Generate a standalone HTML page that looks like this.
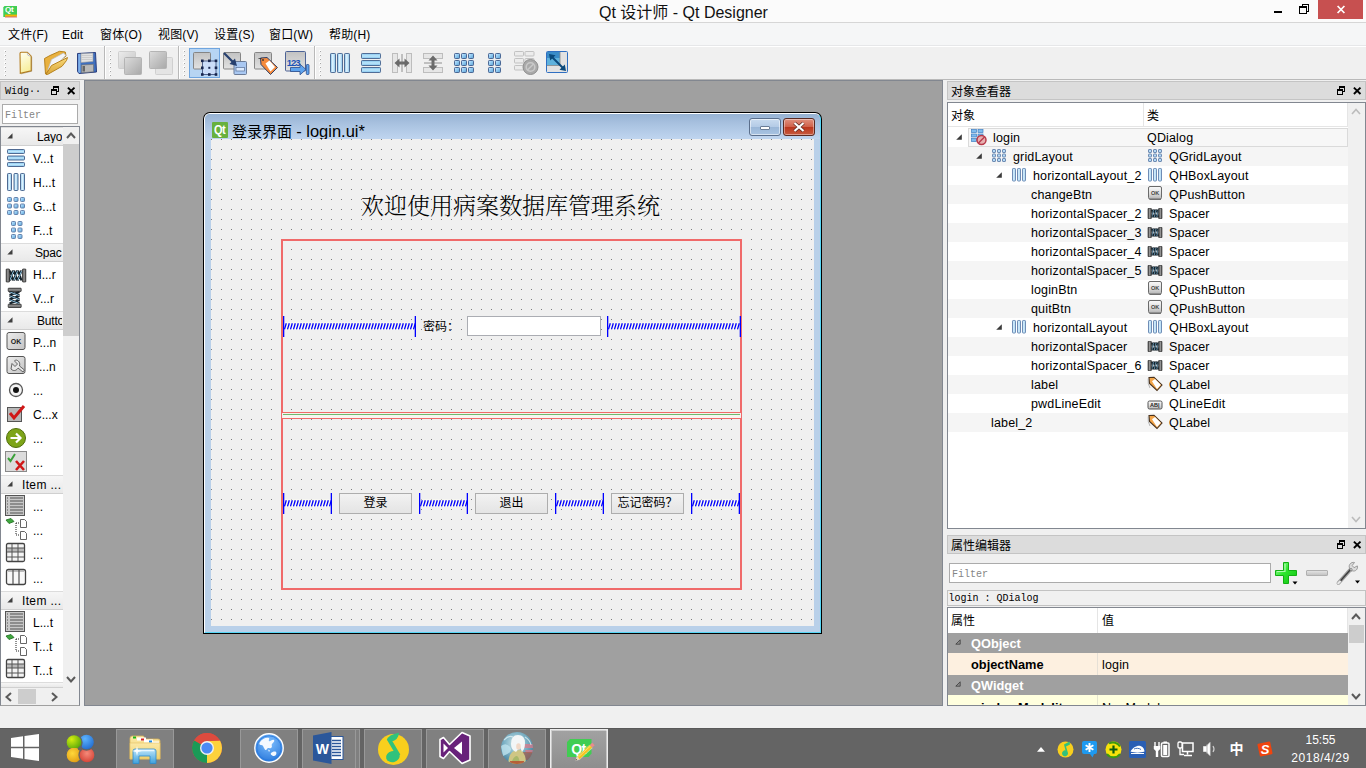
<!DOCTYPE html>
<html lang="zh-CN">
<head>
<meta charset="utf-8">
<title>Qt 设计师 - Qt Designer</title>
<style>
html,body{margin:0;padding:0;width:1366px;height:768px;overflow:hidden;background:#f0f0f0;
  font-family:"Liberation Sans","Noto Sans CJK SC",sans-serif;font-size:12px;color:#000;line-height:1}
*{box-sizing:border-box}
.a{position:absolute}
.t{position:absolute;white-space:nowrap;line-height:1}
.mono{font-family:"Liberation Mono","Noto Sans CJK SC",monospace;font-size:10px}
svg{position:absolute;overflow:visible}
/* title bar */
#titlebar{left:0;top:0;width:1366px;height:22px;background:#fbfbfb}
#titleline{left:0;top:22px;width:1366px;height:1px;background:#d6d6d6}
#menubar{left:0;top:23px;width:1366px;height:22px;background:#f5f6f7}
#menuline{left:0;top:45px;width:1366px;height:1px;background:#e6e7e9}
#toolbar{left:0;top:46px;width:1366px;height:33px;background:#f0f0f0;border-top:1px solid #fff}
#toolline{left:0;top:79px;width:1366px;height:1px;background:#b9b9b9}
#mdi{left:84px;top:80px;width:859px;height:626px;background:#a0a0a0;border:1px solid #828790}
#taskbar{left:0;top:728px;width:1366px;height:40px;background:#646464;border-top:1px solid #595959}
.docktitle{background:#dcdcdc;border:1px solid #c4c4c4;height:20px}
.white{background:#fff}
.grip{width:2px;height:28px;background:linear-gradient(135deg,#fff 0,#fff 50%,#a9a9a9 50%,#a9a9a9 100%) 0 0/2px 4px repeat-y;background-image:linear-gradient(#0000 0,#0000 2px,#f0f0f0 2px,#f0f0f0 4px),linear-gradient(135deg,#fdfdfd 0,#fdfdfd 50%,#a6a6a6 50%,#a6a6a6 100%);background-size:2px 4px,2px 2px;background-repeat:repeat-y,repeat}
.cat{background:linear-gradient(#f6f6f6,#e9e9e9);border-top:1px solid #dcdcdc;border-bottom:1px solid #d0d0d0}
.sim{font-family:"Liberation Sans","Noto Sans CJK SC",sans-serif}
.song{font-family:"Liberation Serif","Noto Serif CJK SC",serif}
.btn{border:1px solid #adadad;background:linear-gradient(#f2f2f2,#e4e4e4);font-size:12px;text-align:center;line-height:19px;white-space:nowrap}
.ot{font-size:12.500px;letter-spacing:0.160px;margin-top:1px}
.pb{font-size:12.800px;font-weight:bold}
.m{top:29px;font-size:12px;letter-spacing:0.150px}
</style>
</head>
<body>
<!-- ===== main window chrome ===== -->
<div class="a" id="titlebar"></div>
<div class="a" id="titleline"></div>
<div class="a" id="menubar"></div>
<div class="a" id="menuline"></div>
<div class="a" id="toolbar"></div>
<div class="a" id="toolline"></div>
<div class="a" id="mdi"></div>
<!-- title bar -->
<svg class="a" style="left:3px;top:5px" width="15" height="13" viewBox="0 0 15 13"><path d="M1.5 1h12.5v9.5l-1.5 1.5H0.3v-9.8z" fill="#41cd52"/><rect x="2" y="9.6" width="12" height="2.2" fill="#f5b400"/><rect x="2" y="11.5" width="12" height="1" fill="#e07070"/></svg>
<div class="t" style="left:5px;top:6px;font-size:8px;font-weight:bold;color:#fff;letter-spacing:-0.3px">Qt</div>
<div class="t" id="wtitle" style="left:599px;top:4.5px;font-size:16px;color:#111">Qt 设计师 - Qt Designer</div>
<div class="a" style="left:1274px;top:11px;width:8px;height:2px;background:#000"></div>
<svg class="a" style="left:1299px;top:4px" width="11" height="11" viewBox="0 0 11 11" shape-rendering="crispEdges"><path d="M3.500 2V0.500H9.500V7.500H8" fill="none" stroke="#000" stroke-width="1"/><rect x="0.500" y="3.500" width="7" height="6" fill="none" stroke="#000" stroke-width="1"/><rect x="0" y="2" width="8" height="2" fill="#000"/></svg>
<div class="a" style="left:1318px;top:0;width:45px;height:19px;background:#c75050"></div>
<svg class="a" style="left:1337px;top:6px" width="8" height="7" viewBox="0 0 8 7"><path d="M0.600 0l6.800 7M7.400 0l-6.800 7" stroke="#fff" stroke-width="1.700" fill="none"/></svg>

<!-- menu bar -->
<div class="t m" style="left:8px">文件(F)</div>
<div class="t m" style="left:62px">Edit</div>
<div class="t m" style="left:100px">窗体(O)</div>
<div class="t m" style="left:158px">视图(V)</div>
<div class="t m" style="left:214px">设置(S)</div>
<div class="t m" style="left:269px">窗口(W)</div>
<div class="t m" style="left:329px">帮助(H)</div>

<!-- toolbar -->
<svg width="0" height="0" style="position:absolute"><defs>
<linearGradient id="gBlueV" x1="0" y1="0" x2="1" y2="0"><stop offset="0" stop-color="#7fbfe8"/><stop offset="0.45" stop-color="#e6f6ff"/><stop offset="1" stop-color="#86c4ea"/></linearGradient>
<linearGradient id="gBlueH" x1="0" y1="0" x2="0" y2="1"><stop offset="0" stop-color="#7fc4ee"/><stop offset="0.5" stop-color="#bfe6fb"/><stop offset="1" stop-color="#7fc4ee"/></linearGradient>
<linearGradient id="gGray" x1="0" y1="0" x2="1" y2="1"><stop offset="0" stop-color="#ececec"/><stop offset="1" stop-color="#c4c4c4"/></linearGradient>
<linearGradient id="gGrayD" x1="0" y1="0" x2="1" y2="1"><stop offset="0" stop-color="#dcdcdc"/><stop offset="1" stop-color="#a8a8a8"/></linearGradient>
<linearGradient id="gGrayV" x1="0" y1="0" x2="0" y2="1"><stop offset="0" stop-color="#c2c2c2"/><stop offset="1" stop-color="#e2e2e2"/></linearGradient>
<linearGradient id="gBtn" x1="0" y1="0" x2="0" y2="1"><stop offset="0" stop-color="#fafafa"/><stop offset="0.550" stop-color="#dedede"/><stop offset="1" stop-color="#b4b4b4"/></linearGradient>
<linearGradient id="gDoc" x1="0" y1="0" x2="0.3" y2="1"><stop offset="0" stop-color="#fffff2"/><stop offset="1" stop-color="#f7ee9c"/></linearGradient>
<linearGradient id="gFold" x1="0" y1="0" x2="0" y2="1"><stop offset="0" stop-color="#f9d978"/><stop offset="1" stop-color="#d9a63a"/></linearGradient>
<linearGradient id="gSq" x1="0" y1="0" x2="1" y2="1"><stop offset="0" stop-color="#cfeaff"/><stop offset="0.5" stop-color="#8ec8f0"/><stop offset="1" stop-color="#5b9fd0"/></linearGradient>
</defs></svg>
<div class="a grip" style="left:4px;top:50px"></div>
<div class="a grip" style="left:109px;top:50px"></div>
<div class="a grip" style="left:183px;top:50px"></div>
<div class="a grip" style="left:319px;top:50px"></div>
<div class="a" style="left:104px;top:46px;width:1px;height:33px;background:#b9b9b9"></div><div class="a" style="left:105px;top:47px;width:1px;height:32px;background:#fff"></div>
<div class="a" style="left:178px;top:46px;width:1px;height:33px;background:#b9b9b9"></div><div class="a" style="left:179px;top:47px;width:1px;height:32px;background:#fff"></div>
<div class="a" style="left:314px;top:46px;width:1px;height:33px;background:#b9b9b9"></div><div class="a" style="left:315px;top:47px;width:1px;height:32px;background:#fff"></div>
<svg style="left:18px;top:51px" width="16" height="24" viewBox="0 0 16 24"><path d="M2 2.600Q2 1.400 3.200 1.300L9.300 1.200L13.200 5.300V19.700L2.300 22.400Z" fill="url(#gDoc)" stroke="#b47c1c" stroke-width="1.100"/><path d="M13.700 6v14.200L3 22.900" fill="none" stroke="#8a6a30" stroke-width="0.700" opacity="0.600"/><path d="M9.200 1.800Q9 5 12.600 5.300" fill="#fff" stroke="#a9a9b4" stroke-width="0.700"/></svg>
<svg style="left:43px;top:50px" width="26" height="26" viewBox="0 0 26 26"><path d="M1.500 8.500L7 5.500L16.500 1.300L22.300 2L23 6L10 16L2.500 24Z" fill="#e9b13f" stroke="#b88420" stroke-width="1"/><path d="M4.800 20L8.500 9.500L20.500 3L22.800 5.300L9 20Z" fill="#f3f5f9" stroke="#b9bdc6" stroke-width="0.700"/><path d="M3 24.400L8.500 15.500L24.500 7.500L23.500 10.500L19 16.300L4.500 24.500Z" fill="url(#gFold)" stroke="#b88420" stroke-width="1"/></svg>
<svg style="left:76px;top:51px" width="22" height="24" viewBox="0 0 22 24"><path d="M1.5 2.5L19.5 1.5L20.5 21L3 22.5L1.5 20.5Z" fill="#3f6fbe" stroke="#2c3f7e" stroke-width="1"/><path d="M2.2 3L4.5 3V21.5L3 22L2.2 20.5Z" fill="#7fb0ea"/><path d="M5 2.7L17 2V10.5L5 11.5Z" fill="#e2e2e2" stroke="#9a9a9a" stroke-width="0.6"/><path d="M5.5 14L17.5 13.3V20.8L5.5 21.8Z" fill="#b9b9b9" stroke="#6d6d6d" stroke-width="0.6"/><rect x="6.5" y="15" width="2.5" height="5.5" fill="#666"/><path d="M5.5 4.5h11M5.5 6.5h11M5.5 8.5h11" stroke="#bdbdbd" stroke-width="0.6"/></svg>
<svg style="left:118px;top:51px" width="25" height="25" viewBox="0 0 25 25"><rect x="0.5" y="0.5" width="17" height="17" rx="1" fill="url(#gGray)" stroke="#cfcfcf"/><rect x="6.5" y="6.5" width="17" height="17" rx="1" fill="url(#gGrayD)" stroke="#b4b4b4"/></svg>
<svg style="left:149px;top:51px" width="25" height="25" viewBox="0 0 25 25"><rect x="6.5" y="6.5" width="17" height="17" rx="1" fill="#e4e4e4" stroke="#d0d0d0"/><rect x="0.5" y="0.5" width="17" height="17" rx="1" fill="url(#gGrayD)" stroke="#b4b4b4"/></svg>
<div class="a" style="left:189px;top:48px;width:31px;height:30px;background:#b7d5f3;border:1px solid #6fa5df"></div>
<svg style="left:193px;top:52px" width="25" height="25" viewBox="0 0 25 25"><rect x="0.500" y="0.500" width="17" height="16.500" rx="1" fill="url(#gGrayV)" stroke="#858585"/><rect x="9.500" y="9" width="13.500" height="13.500" fill="#cbddf9" stroke="#44557f" stroke-width="0.900"/><g fill="#16244d"><rect x="8" y="7.500" width="2.600" height="2.600"/><rect x="15" y="7.500" width="2.600" height="2.600"/><rect x="21.700" y="7.500" width="2.600" height="2.600"/><rect x="8" y="14.500" width="2.600" height="2.600"/><rect x="21.700" y="14.500" width="2.600" height="2.600"/><rect x="8" y="21.200" width="2.600" height="2.600"/><rect x="15" y="21.200" width="2.600" height="2.600"/><rect x="21.700" y="21.200" width="2.600" height="2.600"/><rect x="15.300" y="14.800" width="2" height="2"/></g></svg>
<svg style="left:223px;top:52px" width="25" height="25" viewBox="0 0 25 25"><rect x="0.500" y="0.500" width="17" height="16.500" rx="1" fill="url(#gGrayV)" stroke="#858585"/><rect x="11" y="9.500" width="12.500" height="13" rx="1" fill="#a9c8f2" stroke="#6b7b96"/><rect x="13" y="15.500" width="8.500" height="3.500" fill="#dcebff" stroke="#5b6f94" stroke-width="0.700"/><path d="M1 1L10.500 10.500" stroke="#27406f" stroke-width="2.200"/><path d="M14 14L6.500 12L12 6.500Z" fill="#27406f"/></svg>
<svg style="left:254px;top:52px" width="26" height="26" viewBox="0 0 26 26"><rect x="0.500" y="0.500" width="17" height="16.500" rx="1" fill="url(#gGrayV)" stroke="#858585"/><path d="M6.500 6L13 5.500L23.500 15.500L16.500 22.500L7 12.500Z" fill="#f58a3c" stroke="#2f3f66" stroke-width="1"/><path d="M11.500 11.500L15.500 8.500L21 15L16.500 19.500Z" fill="#fff"/><circle cx="9" cy="8" r="0.900" fill="#333"/><path d="M4.500 6.500h3" stroke="#333" stroke-width="0.800"/></svg>
<svg style="left:285px;top:51px" width="25" height="25" viewBox="0 0 25 25"><rect x="0.500" y="0.500" width="20" height="19.500" rx="1" fill="url(#gGrayV)" stroke="#4d6396"/><text x="1.800" y="14.600" font-family="Liberation Sans, sans-serif" font-size="9.500" font-weight="bold" fill="#1c53b8" letter-spacing="-1.100">123</text><path d="M5.500 16.500h9.500v-3.300l6 5.300l-6 5.300v-3.300H5.500Z" fill="#5fa4ee" stroke="#2b4d8c" stroke-width="0.800"/><rect x="21.300" y="13.500" width="2.700" height="10" rx="0.800" fill="#5fa4ee" stroke="#2b4d8c" stroke-width="0.800"/></svg>
<svg style="left:329px;top:52px" width="22" height="22" viewBox="0 0 22 22"><rect x="1.5" y="1.5" width="5" height="19" rx="0.8" fill="url(#gBlueV)" stroke="#44618c" stroke-width="0.9"/><rect x="8.5" y="1.5" width="5" height="19" rx="0.8" fill="url(#gBlueV)" stroke="#44618c" stroke-width="0.9"/><rect x="15.5" y="1.5" width="5" height="19" rx="0.8" fill="url(#gBlueV)" stroke="#44618c" stroke-width="0.9"/></svg>
<svg style="left:360px;top:52px" width="22" height="22" viewBox="0 0 22 22"><rect x="1.5" y="1.5" width="19" height="5" rx="0.8" fill="url(#gBlueH)" stroke="#44618c" stroke-width="0.9"/><rect x="1.5" y="8.5" width="19" height="5" rx="0.8" fill="url(#gBlueH)" stroke="#44618c" stroke-width="0.9"/><rect x="1.5" y="15.5" width="19" height="5" rx="0.8" fill="url(#gBlueH)" stroke="#44618c" stroke-width="0.9"/></svg>
<svg style="left:391px;top:52px" width="22" height="22" viewBox="0 0 22 22"><rect x="1.5" y="1.5" width="5" height="19" fill="#e6e6e6" stroke="#bdbdbd"/><rect x="15.5" y="1.5" width="5" height="19" fill="#e6e6e6" stroke="#bdbdbd"/><path d="M3.5 11l5-4.5v3h5v-3l5 4.5l-5 4.5v-3h-5v3Z" fill="#6a6a6a"/><path d="M11 2v18" stroke="#777" stroke-width="0.8"/></svg>
<svg style="left:422px;top:52px" width="22" height="22" viewBox="0 0 22 22"><rect x="1.5" y="1.5" width="19" height="5" fill="#e6e6e6" stroke="#bdbdbd"/><rect x="1.5" y="15.5" width="19" height="5" fill="#e6e6e6" stroke="#bdbdbd"/><path d="M11 3.5l4.5 5h-3v5h3l-4.5 5l-4.5-5h3v-5h-3Z" fill="#6a6a6a"/><path d="M2 11h18" stroke="#777" stroke-width="0.8"/></svg>
<svg style="left:453px;top:52px" width="22" height="22" viewBox="0 0 22 22"><rect x="1.5" y="1.5" width="5" height="5" rx="0.8" fill="url(#gSq)" stroke="#3d5a8a" stroke-width="0.9"/><rect x="8.5" y="1.5" width="5" height="5" rx="0.8" fill="url(#gSq)" stroke="#3d5a8a" stroke-width="0.9"/><rect x="15.5" y="1.5" width="5" height="5" rx="0.8" fill="url(#gSq)" stroke="#3d5a8a" stroke-width="0.9"/><rect x="1.5" y="8.5" width="5" height="5" rx="0.8" fill="url(#gSq)" stroke="#3d5a8a" stroke-width="0.9"/><rect x="8.5" y="8.5" width="5" height="5" rx="0.8" fill="url(#gSq)" stroke="#3d5a8a" stroke-width="0.9"/><rect x="15.5" y="8.5" width="5" height="5" rx="0.8" fill="url(#gSq)" stroke="#3d5a8a" stroke-width="0.9"/><rect x="1.5" y="15.5" width="5" height="5" rx="0.8" fill="url(#gSq)" stroke="#3d5a8a" stroke-width="0.9"/><rect x="8.5" y="15.5" width="5" height="5" rx="0.8" fill="url(#gSq)" stroke="#3d5a8a" stroke-width="0.9"/><rect x="15.5" y="15.5" width="5" height="5" rx="0.8" fill="url(#gSq)" stroke="#3d5a8a" stroke-width="0.9"/></svg>
<svg style="left:487px;top:52px" width="15" height="22" viewBox="0 0 15 22"><rect x="1.5" y="1.5" width="5" height="5" rx="0.8" fill="url(#gSq)" stroke="#3d5a8a" stroke-width="0.9"/><rect x="8.5" y="1.5" width="5" height="5" rx="0.8" fill="url(#gSq)" stroke="#3d5a8a" stroke-width="0.9"/><rect x="1.5" y="8.5" width="5" height="5" rx="0.8" fill="url(#gSq)" stroke="#3d5a8a" stroke-width="0.9"/><rect x="8.5" y="8.5" width="5" height="5" rx="0.8" fill="url(#gSq)" stroke="#3d5a8a" stroke-width="0.9"/><rect x="1.5" y="15.5" width="5" height="5" rx="0.8" fill="url(#gSq)" stroke="#3d5a8a" stroke-width="0.9"/><rect x="8.5" y="15.5" width="5" height="5" rx="0.8" fill="url(#gSq)" stroke="#3d5a8a" stroke-width="0.9"/></svg>
<svg style="left:514px;top:50px" width="26" height="26" viewBox="0 0 26 26"><g fill="#ececec" stroke="#bcbcbc" stroke-width="0.9"><rect x="0.5" y="1.5" width="9" height="4.5" rx="0.8"/><rect x="11" y="1.5" width="9" height="4.5" rx="0.8"/><rect x="0.5" y="8.5" width="9" height="4.5" rx="0.8"/><rect x="11" y="8.5" width="9" height="4.5" rx="0.8"/><rect x="0.5" y="15.5" width="9" height="4.5" rx="0.8"/></g><circle cx="16.5" cy="17" r="7.5" fill="#a9a9a9" stroke="#8f8f8f"/><circle cx="16.5" cy="17" r="4.3" fill="none" stroke="#c9c9c9" stroke-width="1.6"/><path d="M13.5 20L19.5 14" stroke="#c9c9c9" stroke-width="1.6"/></svg>
<svg style="left:546px;top:51px" width="23" height="23" viewBox="0 0 23 23"><rect x="0.5" y="0.5" width="21" height="21" rx="1" fill="#e2e2e2" stroke="#2f6fc2"/><rect x="1" y="1" width="13" height="13.5" fill="#5fb2dd"/><rect x="1" y="1" width="13" height="6" fill="#3a8cc8"/><path d="M14 1v13.5H1" stroke="#888" stroke-width="0.8" fill="none"/><path d="M5 5L18 18" stroke="#0b4a7c" stroke-width="2"/><path d="M3 3l6.5 1.2L4.2 9.5Z" fill="#0b4a7c"/><path d="M20 20l-6.5-1.2l5.3-5.3Z" fill="#0b4a7c"/></svg>

<!-- left dock: widget box -->
<div class="a docktitle" style="left:0;top:81px;width:80px;height:19px"></div>
<div class="t mono" style="left:5px;top:87px">Widg··</div>
<svg style="left:51px;top:86px" width="9" height="9" viewBox="0 0 9 9" shape-rendering="crispEdges"><path d="M2 0h6v6h-2v-1h1v-3h-4v1h-1zM0 3h6v6h-6zM1 5v3h4v-3z" fill="#000" fill-rule="evenodd"/></svg><svg style="left:67px;top:86.7px" width="8.400" height="7.600" viewBox="0 0 8.400 7.600"><path d="M0.900 0.600L7.500 7M7.500 0.600L0.900 7" stroke="#000" stroke-width="1.900" fill="none"/></svg>
<div class="a white" style="left:2px;top:104px;width:76px;height:20px;border:1px solid #ababab"></div>
<div class="t mono" style="left:5px;top:110.500px;color:#858585">Filter</div>
<div class="a white" style="left:0;top:126px;width:80px;height:580px;border:1px solid #828790;border-bottom-color:#a0a0a0"></div>
<div class="a" style="left:63px;top:127px;width:16px;height:561px;background:#f0f0f0"></div>
<div class="a" style="left:63px;top:144px;width:16px;height:192px;background:#cdcdcd"></div>
<svg style="left:66px;top:132px" width="10" height="7" viewBox="0 0 10 7"><path d="M1 6L5 1.5L9 6" fill="none" stroke="#5a5a5a" stroke-width="2"/></svg>
<svg style="left:66px;top:676px" width="10" height="7" viewBox="0 0 10 7"><path d="M1 1L5 5.5L9 1" fill="none" stroke="#5a5a5a" stroke-width="2"/></svg>
<div class="a cat" style="left:1px;top:682px;width:62px;height:6px"></div>
<div class="a" style="left:1px;top:688px;width:78px;height:17px;background:#f0f0f0"></div>
<div class="a" style="left:18px;top:689px;width:18px;height:15px;background:#cdcdcd"></div>
<svg style="left:5px;top:692px" width="7" height="10" viewBox="0 0 7 10"><path d="M6 1L1.5 5L6 9" fill="none" stroke="#5a5a5a" stroke-width="2"/></svg>
<svg style="left:51px;top:692px" width="7" height="10" viewBox="0 0 7 10"><path d="M1 1L5.5 5L1 9" fill="none" stroke="#5a5a5a" stroke-width="2"/></svg>
<div class="a cat" style="left:1px;top:127px;width:62px;height:19px"></div><svg style="left:7px;top:133px" width="6" height="6" viewBox="0 0 6 6"><path d="M5.500 0.300V5.500H0.300Z" fill="#3f3f3f"/></svg><div class="t" style="left:37px;top:131px;width:25px;overflow:hidden;font-size:12px;letter-spacing:-0.200px">Layo</div>
<svg style="left:5px;top:146px" width="24" height="24" viewBox="0 0 24 24"><rect x="2.500" y="3.5" width="17" height="4" rx="0.800" fill="url(#gBlueH)" stroke="#4f6a92" stroke-width="1"/><rect x="2.500" y="10" width="17" height="4" rx="0.800" fill="url(#gBlueH)" stroke="#4f6a92" stroke-width="1"/><rect x="2.500" y="16.5" width="17" height="4" rx="0.800" fill="url(#gBlueH)" stroke="#4f6a92" stroke-width="1"/></svg><div class="t" style="left:33px;top:153px;font-size:12px">V...t</div>
<svg style="left:5px;top:170px" width="24" height="24" viewBox="0 0 24 24"><rect x="2.5" y="3.500" width="4" height="17" rx="0.800" fill="url(#gBlueV)" stroke="#4f6a92" stroke-width="1"/><rect x="9" y="3.500" width="4" height="17" rx="0.800" fill="url(#gBlueV)" stroke="#4f6a92" stroke-width="1"/><rect x="15.5" y="3.500" width="4" height="17" rx="0.800" fill="url(#gBlueV)" stroke="#4f6a92" stroke-width="1"/></svg><div class="t" style="left:33px;top:177px;font-size:12px">H...t</div>
<svg style="left:5px;top:194px" width="24" height="24" viewBox="0 0 24 24"><rect x="2.5" y="3.5" width="4" height="4" rx="0.800" fill="url(#gSq)" stroke="#6482ad" stroke-width="1"/><rect x="9" y="3.5" width="4" height="4" rx="0.800" fill="url(#gSq)" stroke="#6482ad" stroke-width="1"/><rect x="15.5" y="3.5" width="4" height="4" rx="0.800" fill="url(#gSq)" stroke="#6482ad" stroke-width="1"/><rect x="2.5" y="10" width="4" height="4" rx="0.800" fill="url(#gSq)" stroke="#6482ad" stroke-width="1"/><rect x="9" y="10" width="4" height="4" rx="0.800" fill="url(#gSq)" stroke="#6482ad" stroke-width="1"/><rect x="15.5" y="10" width="4" height="4" rx="0.800" fill="url(#gSq)" stroke="#6482ad" stroke-width="1"/><rect x="2.5" y="16.5" width="4" height="4" rx="0.800" fill="url(#gSq)" stroke="#6482ad" stroke-width="1"/><rect x="9" y="16.5" width="4" height="4" rx="0.800" fill="url(#gSq)" stroke="#6482ad" stroke-width="1"/><rect x="15.5" y="16.5" width="4" height="4" rx="0.800" fill="url(#gSq)" stroke="#6482ad" stroke-width="1"/></svg><div class="t" style="left:33px;top:201px;font-size:12px">G...t</div>
<svg style="left:5px;top:218px" width="24" height="24" viewBox="0 0 24 24"><rect x="6.5" y="3.5" width="4" height="4" rx="0.800" fill="url(#gSq)" stroke="#6482ad" stroke-width="1"/><rect x="13" y="3.5" width="4" height="4" rx="0.800" fill="url(#gSq)" stroke="#6482ad" stroke-width="1"/><rect x="6.5" y="10" width="4" height="4" rx="0.800" fill="url(#gSq)" stroke="#6482ad" stroke-width="1"/><rect x="13" y="10" width="4" height="4" rx="0.800" fill="url(#gSq)" stroke="#6482ad" stroke-width="1"/><rect x="6.5" y="16.5" width="4" height="4" rx="0.800" fill="url(#gSq)" stroke="#6482ad" stroke-width="1"/><rect x="13" y="16.5" width="4" height="4" rx="0.800" fill="url(#gSq)" stroke="#6482ad" stroke-width="1"/></svg><div class="t" style="left:33px;top:225px;font-size:12px">F...t</div>
<div class="a cat" style="left:1px;top:243px;width:62px;height:19px"></div><svg style="left:7px;top:249px" width="6" height="6" viewBox="0 0 6 6"><path d="M5.500 0.300V5.500H0.300Z" fill="#3f3f3f"/></svg><div class="t" style="left:35px;top:247px;width:27px;overflow:hidden;font-size:12px;letter-spacing:-0.200px">Spac</div>
<svg style="left:5px;top:262px" width="24" height="24" viewBox="0 0 24 24"><defs><linearGradient id="gBar" x1="0" y1="0" x2="1" y2="0"><stop offset="0" stop-color="#4a4a4a"/><stop offset="0.500" stop-color="#9a9a9a"/><stop offset="1" stop-color="#4a4a4a"/></linearGradient><linearGradient id="gBarH" x1="0" y1="0" x2="0" y2="1"><stop offset="0" stop-color="#4a4a4a"/><stop offset="0.500" stop-color="#9a9a9a"/><stop offset="1" stop-color="#4a4a4a"/></linearGradient></defs>
<path d="M4.500 18.500L8.500 8.500M8.500 18.500L12.500 8.500M12.500 18.500L16.500 8.500M5 8.500L8 18.500M9 8.500L12 18.500M13 8.500L16.500 18.500" stroke="#15222b" stroke-width="2.200" fill="none"/><path d="M5 18L8.500 9M9 18L12.500 9M13 18L16.500 9" stroke="#8fc3e0" stroke-width="1" fill="none"/>
<rect x="1.200" y="7" width="3.300" height="13" rx="0.500" fill="url(#gBar)" stroke="#222" stroke-width="0.700"/><rect x="17.500" y="7" width="3.300" height="13" rx="0.500" fill="url(#gBar)" stroke="#222" stroke-width="0.700"/></svg><div class="t" style="left:33px;top:269px;font-size:12px">H...r</div>
<svg style="left:5px;top:286px" width="24" height="24" viewBox="0 0 24 24"><path d="M4.500 5.500L14.500 9.500M4.500 9.500L14.500 13.500M4.500 13.500L14.500 17.500M14.500 6L4.500 9M14.500 10L4.500 13M14.500 14L4.500 17.500" stroke="#15222b" stroke-width="2.200" fill="none"/><path d="M5 6L14 9.500M5 10L14 13.500M5 14L14 17.500" stroke="#8fc3e0" stroke-width="1" fill="none"/>
<rect x="3.200" y="2.200" width="13" height="3.300" rx="0.500" fill="url(#gBarH)" stroke="#222" stroke-width="0.700"/><rect x="3.200" y="18.200" width="13" height="3.300" rx="0.500" fill="url(#gBarH)" stroke="#222" stroke-width="0.700"/></svg><div class="t" style="left:33px;top:293px;font-size:12px">V...r</div>
<div class="a cat" style="left:1px;top:311px;width:62px;height:19px"></div><svg style="left:7px;top:317px" width="6" height="6" viewBox="0 0 6 6"><path d="M5.500 0.300V5.500H0.300Z" fill="#3f3f3f"/></svg><div class="t" style="left:37px;top:315px;width:25px;overflow:hidden;font-size:12px;letter-spacing:-0.200px">Butto</div>
<svg style="left:5px;top:330px" width="24" height="24" viewBox="0 0 24 24"><rect x="2" y="2.5" width="18" height="17" rx="2" fill="url(#gGray)" stroke="#555" stroke-width="1"/><text x="11" y="14" text-anchor="middle" font-family="Liberation Sans,sans-serif" font-size="7" font-weight="bold" fill="#222">OK</text></svg><div class="t" style="left:33px;top:337px;font-size:12px">P...n</div>
<svg style="left:5px;top:354px" width="24" height="24" viewBox="0 0 24 24"><rect x="2" y="2.5" width="18" height="17" rx="2" fill="url(#gGray)" stroke="#555" stroke-width="1"/><path d="M6 15c3 3 6 1 7-1l5 4 1.5-2-5-4c1-3-1-6-4-6l-1 1 3 3-2.500 2.500-3-3z" fill="#e8e8e8" stroke="#555" stroke-width="0.9"/></svg><div class="t" style="left:33px;top:361px;font-size:12px">T...n</div>
<svg style="left:5px;top:378px" width="24" height="24" viewBox="0 0 24 24"><circle cx="11" cy="12" r="6.5" fill="#f4f4f4" stroke="#555" stroke-width="1.3"/><circle cx="11" cy="12" r="3" fill="#111"/></svg><div class="t" style="left:33px;top:385px;font-size:12px">...</div>
<svg style="left:5px;top:402px" width="24" height="24" viewBox="0 0 24 24"><rect x="2.5" y="5.500" width="14" height="14" fill="#b8b8b8" stroke="#555" stroke-width="1"/><path d="M5 11l4 5 10-12" stroke="#d01818" stroke-width="3" fill="none"/></svg><div class="t" style="left:33px;top:409px;font-size:12px">C...x</div>
<svg style="left:5px;top:426px" width="24" height="24" viewBox="0 0 24 24"><circle cx="11" cy="12" r="9.500" fill="#7da418" stroke="#4f6d0c" stroke-width="1"/><path d="M5.500 12h9M11 7.500l4.500 4.500-4.500 4.500" stroke="#fff" stroke-width="2.2" fill="none"/></svg><div class="t" style="left:33px;top:433px;font-size:12px">...</div>
<svg style="left:5px;top:450px" width="24" height="24" viewBox="0 0 24 24"><rect x="0.500" y="1.500" width="21" height="20" fill="#dcdcdc" stroke="#8a8a8a" stroke-width="1"/><path d="M3 8l2.500 3 4.500-7" stroke="#3aa03a" stroke-width="2" fill="none"/><path d="M11 11l8 9M19 11l-8 9" stroke="#d01818" stroke-width="2.600" fill="none"/></svg><div class="t" style="left:33px;top:457px;font-size:12px">...</div>
<div class="a cat" style="left:1px;top:475px;width:62px;height:19px"></div><svg style="left:7px;top:481px" width="6" height="6" viewBox="0 0 6 6"><path d="M5.500 0.300V5.500H0.300Z" fill="#3f3f3f"/></svg><div class="t" style="left:22px;top:479px;width:40px;overflow:hidden;font-size:12px;letter-spacing:0.350px">Item ...</div>
<svg style="left:5px;top:494px" width="24" height="24" viewBox="0 0 24 24"><rect x="0.500" y="1.500" width="19" height="20" fill="#c8c8c8" stroke="#555" stroke-width="1"/><path d="M2 4h1M5 4h13" stroke="#7a7a7a" stroke-width="1.400"/><path d="M2 7h1M5 7h13" stroke="#7a7a7a" stroke-width="1.400"/><path d="M2 10h1M5 10h13" stroke="#7a7a7a" stroke-width="1.400"/><path d="M2 13h1M5 13h13" stroke="#7a7a7a" stroke-width="1.400"/><path d="M2 16h1M5 16h13" stroke="#7a7a7a" stroke-width="1.400"/><path d="M2 19h1M5 19h13" stroke="#7a7a7a" stroke-width="1.400"/></svg><div class="t" style="left:33px;top:501px;font-size:12px">...</div>
<svg style="left:5px;top:518px" width="24" height="24" viewBox="0 0 24 24"><path d="M1 2l5-1.500 3 3-5 2z" fill="#3fa83f" stroke="#1d6a1d" stroke-width="0.800"/><path d="M11 5h3M11 5v12h3" stroke="#222" stroke-width="1" stroke-dasharray="1 1" fill="none"/><path d="M15.500 1.500h4l2 2v6h-6z" fill="#fff" stroke="#555" stroke-width="0.900"/><path d="M15.500 13.500h4l2 2v6h-6z" fill="#fff" stroke="#555" stroke-width="0.900"/></svg><div class="t" style="left:33px;top:525px;font-size:12px">...</div>
<svg style="left:5px;top:542px" width="24" height="24" viewBox="0 0 24 24"><rect x="1.500" y="1.500" width="18" height="18" rx="1.500" fill="#f4f4f4" stroke="#444" stroke-width="1.300"/><rect x="2" y="6" width="17" height="4" fill="#b8b8b8"/><path d="M2 6h17M2 10h17M2 15h17M7 2v17M13 2v17" stroke="#555" stroke-width="1"/></svg><div class="t" style="left:33px;top:549px;font-size:12px">...</div>
<svg style="left:5px;top:566px" width="24" height="24" viewBox="0 0 24 24"><rect x="1.500" y="3.500" width="19" height="15" rx="2" fill="#f8f8f8" stroke="#444" stroke-width="1.300"/><path d="M3 5h16" stroke="#aaa" stroke-width="1.500"/><path d="M8 4v14M14 4v14" stroke="#555" stroke-width="1.200"/></svg><div class="t" style="left:33px;top:573px;font-size:12px">...</div>
<div class="a cat" style="left:1px;top:591px;width:62px;height:19px"></div><svg style="left:7px;top:597px" width="6" height="6" viewBox="0 0 6 6"><path d="M5.500 0.300V5.500H0.300Z" fill="#3f3f3f"/></svg><div class="t" style="left:22px;top:595px;width:40px;overflow:hidden;font-size:12px;letter-spacing:0.350px">Item ...</div>
<svg style="left:5px;top:610px" width="24" height="24" viewBox="0 0 24 24"><rect x="0.500" y="1.500" width="19" height="20" fill="#c8c8c8" stroke="#555" stroke-width="1"/><path d="M2 4h1M5 4h13" stroke="#7a7a7a" stroke-width="1.400"/><path d="M2 7h1M5 7h13" stroke="#7a7a7a" stroke-width="1.400"/><path d="M2 10h1M5 10h13" stroke="#7a7a7a" stroke-width="1.400"/><path d="M2 13h1M5 13h13" stroke="#7a7a7a" stroke-width="1.400"/><path d="M2 16h1M5 16h13" stroke="#7a7a7a" stroke-width="1.400"/><path d="M2 19h1M5 19h13" stroke="#7a7a7a" stroke-width="1.400"/></svg><div class="t" style="left:33px;top:617px;font-size:12px">L...t</div>
<svg style="left:5px;top:634px" width="24" height="24" viewBox="0 0 24 24"><path d="M1 2l5-1.500 3 3-5 2z" fill="#3fa83f" stroke="#1d6a1d" stroke-width="0.800"/><path d="M11 5h3M11 5v12h3" stroke="#222" stroke-width="1" stroke-dasharray="1 1" fill="none"/><path d="M15.500 1.500h4l2 2v6h-6z" fill="#fff" stroke="#555" stroke-width="0.900"/><path d="M15.500 13.500h4l2 2v6h-6z" fill="#fff" stroke="#555" stroke-width="0.900"/></svg><div class="t" style="left:33px;top:641px;font-size:12px">T...t</div>
<svg style="left:5px;top:658px" width="24" height="24" viewBox="0 0 24 24"><rect x="1.500" y="1.500" width="18" height="18" rx="1.500" fill="#f4f4f4" stroke="#444" stroke-width="1.300"/><rect x="2" y="6" width="17" height="4" fill="#b8b8b8"/><path d="M2 6h17M2 10h17M2 15h17M7 2v17M13 2v17" stroke="#555" stroke-width="1"/></svg><div class="t" style="left:33px;top:665px;font-size:12px">T...t</div>

<!-- form window -->
<div class="a" id="fw" style="left:203px;top:112px;width:619px;height:522px;background:#000;border-radius:7px 7px 0 0"></div>
<div class="a" style="left:204px;top:113px;width:617px;height:520px;background:#b9d0e9;border-radius:6px 6px 0 0;border:1px solid #fff;border-right-color:#56d6f6;border-bottom-color:#56d6f6"></div>
<div class="a" style="left:205px;top:114px;width:615px;height:25px;background:linear-gradient(#97b3d3,#a9c2e0 40%,#bfd5ef);border-radius:5px 5px 0 0"></div>
<div class="a" style="left:205px;top:139px;width:6px;height:70px;background:linear-gradient(#bfd5ef,#b9d0e9)"></div>
<div class="a" id="fc" style="left:211px;top:139px;width:603px;height:487px;background-color:#f0f0f0;background-image:linear-gradient(90deg,transparent 1px,#f0f0f0 1px),linear-gradient(#7e7e7e 1px,transparent 1px);background-size:10px 10px"></div>
<div class="a" style="left:212px;top:122px;width:16px;height:16px;background:#68b13f;border-radius:1px"></div>
<div class="t" style="left:213.500px;top:123px;font-size:13px;font-weight:bold;color:#fff;letter-spacing:-0.8px;transform:scaleX(0.85);transform-origin:0 0">Qt</div>
<div class="a" style="left:232px;top:120px;width:300px;height:19px;overflow:hidden"><div class="t" id="ftitle" style="left:0;top:3px;font-size:15px;line-height:17px">登录界面 <span style="font-size:16.500px">- login.ui*</span></div></div>
<div class="a" style="left:749px;top:118px;width:32px;height:18px;border:1px solid #5b6f8c;border-radius:3px;background:linear-gradient(#c9dbef,#b4cbe6 48%,#9ab7d8 52%,#a9c4e2);box-shadow:inset 0 0 0 1px rgba(255,255,255,.55)"></div>
<div class="a" style="left:760px;top:126px;width:10px;height:4px;background:#fff;border:1px solid #6b7d96;border-radius:1px"></div>
<div class="a" style="left:783px;top:118px;width:32px;height:18px;border:1px solid #5a2a22;border-radius:3px;background:linear-gradient(#e0917f,#d0624b 48%,#bb361d 52%,#c65a3e);box-shadow:inset 0 0 0 1px rgba(255,255,255,.4)"></div>
<svg style="left:793px;top:122px" width="12" height="10" viewBox="0 0 12 10"><path d="M1.500 1l9 8M10.500 1l-9 8" stroke="#5a2a22" stroke-width="3.600" fill="none"/><path d="M1.500 1l9 8M10.500 1l-9 8" stroke="#fff" stroke-width="2.200" fill="none"/></svg>
<div class="t song" id="hl" style="left:361px;top:194.700px;font-size:23px;font-weight:300">欢迎使用病案数据库管理系统</div>
<div class="a" style="left:281px;top:239px;width:461px;height:351px;border:1px solid #f06a6a"></div>
<div class="a" style="left:282px;top:240px;width:459px;height:173px;border:1px solid #f06a6a"></div>
<div class="a" style="left:282px;top:418px;width:459px;height:171px;border:1px solid #f06a6a"></div>
<div class="a" style="left:283px;top:414px;width:457px;height:1px;background:#6fb86f"></div>
<div class="a" style="left:283px;top:413px;width:457px;height:1px;background:#f4f4ea"></div>
<div class="a" style="left:283px;top:415px;width:457px;height:3px;background:#f6f6f0"></div>
<svg width="0" height="0" style="position:absolute"><defs><pattern id="spring" x="1" y="0" width="3" height="21" patternUnits="userSpaceOnUse"><rect y="6.500" width="3" height="7.500" fill="#fbfbf0"/><path d="M0.500 13.300L2.300 7.200" stroke="#0000ff" stroke-width="1.300" fill="none"/></pattern></defs></svg>
<svg style="left:283px;top:316px" width="133" height="21" viewBox="0 0 133 21"><rect x="1" y="0" width="131" height="21" fill="url(#spring)"/><rect x="0" y="0" width="1.300" height="21" fill="#0000ff"/><rect x="131.7" y="0" width="1.300" height="21" fill="#0000ff"/></svg>
<svg style="left:607px;top:316px" width="134" height="21" viewBox="0 0 134 21"><rect x="1" y="0" width="132" height="21" fill="url(#spring)"/><rect x="0" y="0" width="1.300" height="21" fill="#0000ff"/><rect x="132.7" y="0" width="1.300" height="21" fill="#0000ff"/></svg>
<svg style="left:283px;top:493px" width="49" height="21" viewBox="0 0 49 21"><rect x="1" y="0" width="47" height="21" fill="url(#spring)"/><rect x="0" y="0" width="1.300" height="21" fill="#0000ff"/><rect x="47.7" y="0" width="1.300" height="21" fill="#0000ff"/></svg>
<svg style="left:419px;top:493px" width="49" height="21" viewBox="0 0 49 21"><rect x="1" y="0" width="47" height="21" fill="url(#spring)"/><rect x="0" y="0" width="1.300" height="21" fill="#0000ff"/><rect x="47.7" y="0" width="1.300" height="21" fill="#0000ff"/></svg>
<svg style="left:555px;top:493px" width="49" height="21" viewBox="0 0 49 21"><rect x="1" y="0" width="47" height="21" fill="url(#spring)"/><rect x="0" y="0" width="1.300" height="21" fill="#0000ff"/><rect x="47.7" y="0" width="1.300" height="21" fill="#0000ff"/></svg>
<svg style="left:691px;top:493px" width="49" height="21" viewBox="0 0 49 21"><rect x="1" y="0" width="47" height="21" fill="url(#spring)"/><rect x="0" y="0" width="1.300" height="21" fill="#0000ff"/><rect x="47.7" y="0" width="1.300" height="21" fill="#0000ff"/></svg>
<div class="t sim" style="left:423px;top:321px;font-size:12px">密码：</div>
<div class="a white" style="left:467px;top:316px;width:134px;height:20px;border:1px solid #abadb3"></div>
<div class="a btn sim" style="left:339px;top:493px;width:73px;height:21px">登录</div>
<div class="a btn sim" style="left:475px;top:493px;width:73px;height:21px">退出</div>
<div class="a btn sim" style="left:611px;top:493px;width:73px;height:21px">忘记密码？</div>

<!-- right dock: object inspector -->
<div class="a docktitle" style="left:947px;top:81px;width:419px;height:19px"></div>
<div class="t" style="left:951px;top:86px;font-size:12px">对象查看器</div>
<svg style="left:1337px;top:86px" width="9" height="9" viewBox="0 0 9 9" shape-rendering="crispEdges"><path d="M2 0h6v6h-2v-1h1v-3h-4v1h-1zM0 3h6v6h-6zM1 5v3h4v-3z" fill="#000" fill-rule="evenodd"/></svg><svg style="left:1353px;top:86.7px" width="8.400" height="7.600" viewBox="0 0 8.400 7.600"><path d="M0.900 0.600L7.500 7M7.500 0.600L0.900 7" stroke="#000" stroke-width="1.900" fill="none"/></svg>
<div class="a white" style="left:947px;top:102px;width:419px;height:427px;border:1px solid #828790"></div>
<div class="a" style="left:948px;top:103px;width:399px;height:24px;background:#fff;border-bottom:1px solid #e5e5e5"></div>
<div class="a" style="left:1143px;top:103px;width:1px;height:24px;background:#e5e5e5"></div><div class="a" style="left:1347px;top:103px;width:1px;height:24px;background:#e5e5e5"></div>
<div class="t" style="left:951px;top:110px;font-size:12px">对象</div><div class="t" style="left:1147px;top:110px;font-size:12px">类</div>
<div class="a" style="left:1348px;top:103px;width:17px;height:425px;background:#f0f0f0"></div>
<svg style="left:1351px;top:108px" width="10" height="7" viewBox="0 0 10 7"><path d="M1 6L5 1.500L9 6" fill="none" stroke="#bcbcbc" stroke-width="1.600"/></svg>
<svg style="left:1351px;top:516px" width="10" height="7" viewBox="0 0 10 7"><path d="M1 1L5 5.500L9 1" fill="none" stroke="#bcbcbc" stroke-width="1.600"/></svg>
<div class="a" style="left:968px;top:128px;width:380px;height:19px;background:#f7f7f7;border:1px solid #dadada"></div><svg style="left:956px;top:134px" width="6" height="6" viewBox="0 0 6 6"><path d="M5.800 0.200V5.800H0.200Z" fill="#3a3a3a"/></svg><svg style="left:971px;top:129px" width="16" height="16" viewBox="0 0 16 16"><g fill="#7fbcee" stroke="#3f7fc4" stroke-width="0.700"><rect x="0.500" y="0.500" width="5" height="3"/><rect x="7" y="0.500" width="5" height="3"/><rect x="0.500" y="5" width="5" height="3"/><rect x="7" y="5" width="5" height="3"/><rect x="0.500" y="9.500" width="5" height="3"/></g><circle cx="10.500" cy="11" r="4.500" fill="#e8b0b0" stroke="#b83a4a" stroke-width="1.500"/><path d="M7.500 14L13.500 8" stroke="#b83a4a" stroke-width="1.500"/></svg><div class="t ot" style="left:993px;top:131px">login</div><div class="t ot" style="left:1147px;top:131px">QDialog</div>
<div class="a" style="left:948px;top:147px;width:400px;height:19px;background:#f5f5f5"></div><svg style="left:976px;top:153px" width="6" height="6" viewBox="0 0 6 6"><path d="M5.800 0.200V5.800H0.200Z" fill="#3a3a3a"/></svg><svg style="left:991px;top:148px" width="16" height="16" viewBox="0 0 16 16"><rect x="1.5" y="1.5" width="3" height="3" rx="0.500" fill="#b4daf6" stroke="#6f8bb2" stroke-width="1"/><rect x="6.5" y="1.5" width="3" height="3" rx="0.500" fill="#b4daf6" stroke="#6f8bb2" stroke-width="1"/><rect x="11.5" y="1.5" width="3" height="3" rx="0.500" fill="#b4daf6" stroke="#6f8bb2" stroke-width="1"/><rect x="1.5" y="6" width="3" height="3" rx="0.500" fill="#b4daf6" stroke="#6f8bb2" stroke-width="1"/><rect x="6.5" y="6" width="3" height="3" rx="0.500" fill="#b4daf6" stroke="#6f8bb2" stroke-width="1"/><rect x="11.5" y="6" width="3" height="3" rx="0.500" fill="#b4daf6" stroke="#6f8bb2" stroke-width="1"/><rect x="1.5" y="10.5" width="3" height="3" rx="0.500" fill="#b4daf6" stroke="#6f8bb2" stroke-width="1"/><rect x="6.5" y="10.5" width="3" height="3" rx="0.500" fill="#b4daf6" stroke="#6f8bb2" stroke-width="1"/><rect x="11.5" y="10.5" width="3" height="3" rx="0.500" fill="#b4daf6" stroke="#6f8bb2" stroke-width="1"/></svg><div class="t ot" style="left:1013px;top:150px">gridLayout</div><svg style="left:1147px;top:148px" width="16" height="16" viewBox="0 0 16 16"><rect x="1.5" y="1.5" width="3" height="3" rx="0.500" fill="#b4daf6" stroke="#6f8bb2" stroke-width="1"/><rect x="6.5" y="1.5" width="3" height="3" rx="0.500" fill="#b4daf6" stroke="#6f8bb2" stroke-width="1"/><rect x="11.5" y="1.5" width="3" height="3" rx="0.500" fill="#b4daf6" stroke="#6f8bb2" stroke-width="1"/><rect x="1.5" y="6" width="3" height="3" rx="0.500" fill="#b4daf6" stroke="#6f8bb2" stroke-width="1"/><rect x="6.5" y="6" width="3" height="3" rx="0.500" fill="#b4daf6" stroke="#6f8bb2" stroke-width="1"/><rect x="11.5" y="6" width="3" height="3" rx="0.500" fill="#b4daf6" stroke="#6f8bb2" stroke-width="1"/><rect x="1.5" y="10.5" width="3" height="3" rx="0.500" fill="#b4daf6" stroke="#6f8bb2" stroke-width="1"/><rect x="6.5" y="10.5" width="3" height="3" rx="0.500" fill="#b4daf6" stroke="#6f8bb2" stroke-width="1"/><rect x="11.5" y="10.5" width="3" height="3" rx="0.500" fill="#b4daf6" stroke="#6f8bb2" stroke-width="1"/></svg><div class="t ot" style="left:1169px;top:150px">QGridLayout</div>
<svg style="left:996px;top:172px" width="6" height="6" viewBox="0 0 6 6"><path d="M5.800 0.200V5.800H0.200Z" fill="#3a3a3a"/></svg><svg style="left:1011px;top:167px" width="16" height="16" viewBox="0 0 16 16"><rect x="1.5" y="1.500" width="3" height="12.500" rx="0.700" fill="url(#gBlueV)" stroke="#6f8db6" stroke-width="1"/><rect x="6.5" y="1.500" width="3" height="12.500" rx="0.700" fill="url(#gBlueV)" stroke="#6f8db6" stroke-width="1"/><rect x="11.5" y="1.500" width="3" height="12.500" rx="0.700" fill="url(#gBlueV)" stroke="#6f8db6" stroke-width="1"/></svg><div class="t ot" style="left:1033px;top:169px">horizontalLayout_2</div><svg style="left:1147px;top:167px" width="16" height="16" viewBox="0 0 16 16"><rect x="1.5" y="1.500" width="3" height="12.500" rx="0.700" fill="url(#gBlueV)" stroke="#6f8db6" stroke-width="1"/><rect x="6.5" y="1.500" width="3" height="12.500" rx="0.700" fill="url(#gBlueV)" stroke="#6f8db6" stroke-width="1"/><rect x="11.5" y="1.500" width="3" height="12.500" rx="0.700" fill="url(#gBlueV)" stroke="#6f8db6" stroke-width="1"/></svg><div class="t ot" style="left:1169px;top:169px">QHBoxLayout</div>
<div class="a" style="left:948px;top:185px;width:400px;height:19px;background:#f5f5f5"></div><div class="t ot" style="left:1031px;top:188px">changeBtn</div><svg style="left:1147px;top:186px" width="16" height="16" viewBox="0 0 16 16"><rect x="1.500" y="0.500" width="13" height="12.500" rx="1.500" fill="url(#gBtn)" stroke="#6a6a6a" stroke-width="1"/><path d="M2.500 13.500h11.500" stroke="#555" stroke-width="1" opacity="0.700"/><text x="8" y="9" text-anchor="middle" font-family="Liberation Sans,sans-serif" font-size="5.500" font-weight="bold" fill="#444">OK</text></svg><div class="t ot" style="left:1169px;top:188px">QPushButton</div>
<div class="t ot" style="left:1031px;top:207px">horizontalSpacer_2</div><svg style="left:1147px;top:205px" width="16" height="16" viewBox="0 0 16 16"><path d="M4.500 12.500L6.500 4.500M7 12.500L9 4.500M9.500 12.500L11.500 4.500M4.500 4.500L6.500 12.500M7 4.500L9 12.500M9.500 4.500L11.500 12.500" stroke="#15222b" stroke-width="1.500" fill="none"/><path d="M4.800 12L6.500 5M7.300 12L9 5M9.800 12L11.500 5" stroke="#7fb6d6" stroke-width="0.700" fill="none"/><path d="M1 3.500h3.300v10H1z" fill="url(#gBar)" stroke="#222" stroke-width="0.600"/><path d="M11.700 3.500H15v10h-3.300z" fill="url(#gBar)" stroke="#222" stroke-width="0.600"/></svg><div class="t ot" style="left:1169px;top:207px">Spacer</div>
<div class="a" style="left:948px;top:223px;width:400px;height:19px;background:#f5f5f5"></div><div class="t ot" style="left:1031px;top:226px">horizontalSpacer_3</div><svg style="left:1147px;top:224px" width="16" height="16" viewBox="0 0 16 16"><path d="M4.500 12.500L6.500 4.500M7 12.500L9 4.500M9.500 12.500L11.500 4.500M4.500 4.500L6.500 12.500M7 4.500L9 12.500M9.500 4.500L11.500 12.500" stroke="#15222b" stroke-width="1.500" fill="none"/><path d="M4.800 12L6.500 5M7.300 12L9 5M9.800 12L11.500 5" stroke="#7fb6d6" stroke-width="0.700" fill="none"/><path d="M1 3.500h3.300v10H1z" fill="url(#gBar)" stroke="#222" stroke-width="0.600"/><path d="M11.700 3.500H15v10h-3.300z" fill="url(#gBar)" stroke="#222" stroke-width="0.600"/></svg><div class="t ot" style="left:1169px;top:226px">Spacer</div>
<div class="t ot" style="left:1031px;top:245px">horizontalSpacer_4</div><svg style="left:1147px;top:243px" width="16" height="16" viewBox="0 0 16 16"><path d="M4.500 12.500L6.500 4.500M7 12.500L9 4.500M9.500 12.500L11.500 4.500M4.500 4.500L6.500 12.500M7 4.500L9 12.500M9.500 4.500L11.500 12.500" stroke="#15222b" stroke-width="1.500" fill="none"/><path d="M4.800 12L6.500 5M7.300 12L9 5M9.800 12L11.500 5" stroke="#7fb6d6" stroke-width="0.700" fill="none"/><path d="M1 3.500h3.300v10H1z" fill="url(#gBar)" stroke="#222" stroke-width="0.600"/><path d="M11.700 3.500H15v10h-3.300z" fill="url(#gBar)" stroke="#222" stroke-width="0.600"/></svg><div class="t ot" style="left:1169px;top:245px">Spacer</div>
<div class="a" style="left:948px;top:261px;width:400px;height:19px;background:#f5f5f5"></div><div class="t ot" style="left:1031px;top:264px">horizontalSpacer_5</div><svg style="left:1147px;top:262px" width="16" height="16" viewBox="0 0 16 16"><path d="M4.500 12.500L6.500 4.500M7 12.500L9 4.500M9.500 12.500L11.500 4.500M4.500 4.500L6.500 12.500M7 4.500L9 12.500M9.500 4.500L11.500 12.500" stroke="#15222b" stroke-width="1.500" fill="none"/><path d="M4.800 12L6.500 5M7.300 12L9 5M9.800 12L11.500 5" stroke="#7fb6d6" stroke-width="0.700" fill="none"/><path d="M1 3.500h3.300v10H1z" fill="url(#gBar)" stroke="#222" stroke-width="0.600"/><path d="M11.700 3.500H15v10h-3.300z" fill="url(#gBar)" stroke="#222" stroke-width="0.600"/></svg><div class="t ot" style="left:1169px;top:264px">Spacer</div>
<div class="t ot" style="left:1031px;top:283px">loginBtn</div><svg style="left:1147px;top:281px" width="16" height="16" viewBox="0 0 16 16"><rect x="1.500" y="0.500" width="13" height="12.500" rx="1.500" fill="url(#gBtn)" stroke="#6a6a6a" stroke-width="1"/><path d="M2.500 13.500h11.500" stroke="#555" stroke-width="1" opacity="0.700"/><text x="8" y="9" text-anchor="middle" font-family="Liberation Sans,sans-serif" font-size="5.500" font-weight="bold" fill="#444">OK</text></svg><div class="t ot" style="left:1169px;top:283px">QPushButton</div>
<div class="a" style="left:948px;top:299px;width:400px;height:19px;background:#f5f5f5"></div><div class="t ot" style="left:1031px;top:302px">quitBtn</div><svg style="left:1147px;top:300px" width="16" height="16" viewBox="0 0 16 16"><rect x="1.500" y="0.500" width="13" height="12.500" rx="1.500" fill="url(#gBtn)" stroke="#6a6a6a" stroke-width="1"/><path d="M2.500 13.500h11.500" stroke="#555" stroke-width="1" opacity="0.700"/><text x="8" y="9" text-anchor="middle" font-family="Liberation Sans,sans-serif" font-size="5.500" font-weight="bold" fill="#444">OK</text></svg><div class="t ot" style="left:1169px;top:302px">QPushButton</div>
<svg style="left:996px;top:324px" width="6" height="6" viewBox="0 0 6 6"><path d="M5.800 0.200V5.800H0.200Z" fill="#3a3a3a"/></svg><svg style="left:1011px;top:319px" width="16" height="16" viewBox="0 0 16 16"><rect x="1.5" y="1.500" width="3" height="12.500" rx="0.700" fill="url(#gBlueV)" stroke="#6f8db6" stroke-width="1"/><rect x="6.5" y="1.500" width="3" height="12.500" rx="0.700" fill="url(#gBlueV)" stroke="#6f8db6" stroke-width="1"/><rect x="11.5" y="1.500" width="3" height="12.500" rx="0.700" fill="url(#gBlueV)" stroke="#6f8db6" stroke-width="1"/></svg><div class="t ot" style="left:1033px;top:321px">horizontalLayout</div><svg style="left:1147px;top:319px" width="16" height="16" viewBox="0 0 16 16"><rect x="1.5" y="1.500" width="3" height="12.500" rx="0.700" fill="url(#gBlueV)" stroke="#6f8db6" stroke-width="1"/><rect x="6.5" y="1.500" width="3" height="12.500" rx="0.700" fill="url(#gBlueV)" stroke="#6f8db6" stroke-width="1"/><rect x="11.5" y="1.500" width="3" height="12.500" rx="0.700" fill="url(#gBlueV)" stroke="#6f8db6" stroke-width="1"/></svg><div class="t ot" style="left:1169px;top:321px">QHBoxLayout</div>
<div class="a" style="left:948px;top:337px;width:400px;height:19px;background:#f5f5f5"></div><div class="t ot" style="left:1031px;top:340px">horizontalSpacer</div><svg style="left:1147px;top:338px" width="16" height="16" viewBox="0 0 16 16"><path d="M4.500 12.500L6.500 4.500M7 12.500L9 4.500M9.500 12.500L11.500 4.500M4.500 4.500L6.500 12.500M7 4.500L9 12.500M9.500 4.500L11.500 12.500" stroke="#15222b" stroke-width="1.500" fill="none"/><path d="M4.800 12L6.500 5M7.300 12L9 5M9.800 12L11.500 5" stroke="#7fb6d6" stroke-width="0.700" fill="none"/><path d="M1 3.500h3.300v10H1z" fill="url(#gBar)" stroke="#222" stroke-width="0.600"/><path d="M11.700 3.500H15v10h-3.300z" fill="url(#gBar)" stroke="#222" stroke-width="0.600"/></svg><div class="t ot" style="left:1169px;top:340px">Spacer</div>
<div class="t ot" style="left:1031px;top:359px">horizontalSpacer_6</div><svg style="left:1147px;top:357px" width="16" height="16" viewBox="0 0 16 16"><path d="M4.500 12.500L6.500 4.500M7 12.500L9 4.500M9.500 12.500L11.500 4.500M4.500 4.500L6.500 12.500M7 4.500L9 12.500M9.500 4.500L11.500 12.500" stroke="#15222b" stroke-width="1.500" fill="none"/><path d="M4.800 12L6.500 5M7.300 12L9 5M9.800 12L11.500 5" stroke="#7fb6d6" stroke-width="0.700" fill="none"/><path d="M1 3.500h3.300v10H1z" fill="url(#gBar)" stroke="#222" stroke-width="0.600"/><path d="M11.700 3.500H15v10h-3.300z" fill="url(#gBar)" stroke="#222" stroke-width="0.600"/></svg><div class="t ot" style="left:1169px;top:359px">Spacer</div>
<div class="a" style="left:948px;top:375px;width:400px;height:19px;background:#f5f5f5"></div><div class="t ot" style="left:1031px;top:378px">label</div><svg style="left:1147px;top:376px" width="16" height="16" viewBox="0 0 16 16"><path d="M2 1.500L7 1.200L15 9L10 14.500L2.500 7.500Z" fill="#f4a64a" stroke="#4a3420" stroke-width="1.100"/><path d="M5 5.300L8 2.900L13.800 8.800L10 12.900Z" fill="#fff"/><path d="M1.200 2.500Q0.500 8 3 12" stroke="#888" stroke-width="0.600" fill="none"/></svg><div class="t ot" style="left:1169px;top:378px">QLabel</div>
<div class="t ot" style="left:1031px;top:397px">pwdLineEdit</div><svg style="left:1147px;top:395px" width="16" height="16" viewBox="0 0 16 16"><rect x="1" y="6" width="14" height="8" rx="1.500" fill="url(#gBtn)" stroke="#555" stroke-width="1"/><text x="7.800" y="12.300" text-anchor="middle" font-family="Liberation Sans,sans-serif" font-size="5.500" font-weight="bold" fill="#222">AB|</text></svg><div class="t ot" style="left:1169px;top:397px">QLineEdit</div>
<div class="a" style="left:948px;top:413px;width:400px;height:19px;background:#f5f5f5"></div><div class="t ot" style="left:991px;top:416px">label_2</div><svg style="left:1147px;top:414px" width="16" height="16" viewBox="0 0 16 16"><path d="M2 1.500L7 1.200L15 9L10 14.500L2.500 7.500Z" fill="#f4a64a" stroke="#4a3420" stroke-width="1.100"/><path d="M5 5.300L8 2.900L13.800 8.800L10 12.900Z" fill="#fff"/><path d="M1.200 2.500Q0.500 8 3 12" stroke="#888" stroke-width="0.600" fill="none"/></svg><div class="t ot" style="left:1169px;top:416px">QLabel</div>

<!-- property editor -->
<div class="a docktitle" style="left:947px;top:535px;width:419px;height:19px"></div>
<div class="t" style="left:951px;top:540px;font-size:12px">属性编辑器</div>
<svg style="left:1337px;top:540px" width="9" height="9" viewBox="0 0 9 9" shape-rendering="crispEdges"><path d="M2 0h6v6h-2v-1h1v-3h-4v1h-1zM0 3h6v6h-6zM1 5v3h4v-3z" fill="#000" fill-rule="evenodd"/></svg><svg style="left:1353px;top:540.7px" width="8.400" height="7.600" viewBox="0 0 8.400 7.600"><path d="M0.900 0.600L7.500 7M7.500 0.600L0.900 7" stroke="#000" stroke-width="1.900" fill="none"/></svg>
<div class="a white" style="left:949px;top:563px;width:322px;height:20px;border:1px solid #ababab"></div>
<div class="t mono" style="left:952px;top:569.500px;color:#858585">Filter</div>
<svg style="left:1275px;top:562px" width="24" height="24" viewBox="0 0 24 24"><defs><linearGradient id="gPlus" x1="0" y1="0" x2="1" y2="1"><stop offset="0" stop-color="#a8ffa8"/><stop offset="0.450" stop-color="#2ee62e"/><stop offset="1" stop-color="#10c010"/></linearGradient></defs><path d="M8.500 0.500h5v8h8v5h-8v8h-5v-8h-8v-5h8z" fill="url(#gPlus)" stroke="#12b012" stroke-width="1"/><path d="M10 2v7.500H2" stroke="#c8ffc8" stroke-width="1.200" fill="none" opacity="0.800"/><path d="M17.500 19.500h5l-2.500 3z" fill="#000"/></svg>
<div class="a" style="left:1306px;top:570px;width:22px;height:6px;background:linear-gradient(#e2e2e2,#c4c4c4);border:1px solid #b0b0b0;border-radius:1px"></div>
<svg style="left:1336px;top:561px" width="26" height="26" viewBox="0 0 26 26"><path d="M2.500 22L15 8" stroke="#9c9c9c" stroke-width="3.800" stroke-linecap="round"/><path d="M3 21.500L14.500 8.500" stroke="#3c3c3c" stroke-width="1.300" stroke-linecap="round"/><path d="M2.300 22.300L4 20.500" stroke="#e8e8e8" stroke-width="2.200" stroke-linecap="round"/><path d="M13.500 7c-1.300-3 1.500-6.300 5-5.500l-2.300 3 1.800 2.200 3.300-1.800c1 3.200-2 6.200-5.300 4.800l-1.200 0.800z" fill="#dcdcdc" stroke="#9a9a9a" stroke-width="1"/><circle cx="15" cy="8.500" r="1" fill="#fff" stroke="#444" stroke-width="0.600"/><path d="M19 19.500h5l-2.500 3z" fill="#000"/></svg>
<div class="a" style="left:947px;top:590px;width:419px;height:16px;border:1px solid #c2c2c2;background:#f0f0f0"></div>
<div class="t mono" style="left:948.500px;top:594px">login : QDialog</div>
<div class="a white" style="left:947px;top:607px;width:419px;height:99px;border:1px solid #828790;overflow:hidden" id="pbox">
<div class="a" style="left:0;top:0;width:400px;height:25px;background:#fff"></div><div class="a" style="left:149px;top:0;width:1px;height:25px;background:#e5e5e5"></div><div class="a" style="left:399px;top:0;width:1px;height:25px;background:#e5e5e5"></div><div class="t" style="left:3px;top:7px;font-size:12px">属性</div><div class="t" style="left:154px;top:7px;font-size:12px">值</div>
<div class="a" style="left:0;top:25px;width:400px;height:20px;background:#a0a0a0"></div><svg style="left:7px;top:31px" width="6" height="6" viewBox="0 0 6 6"><path d="M5.200 0.800V5.200H0.800Z" fill="#8c8c8c" stroke="#3c3c3c" stroke-width="0.800"/></svg><div class="t pb" style="left:23px;top:30px;color:#fff">QObject</div>
<div class="a" style="left:0;top:45px;width:400px;height:22px;background:#fdf0e0"></div><div class="a" style="left:149px;top:45px;width:1px;height:22px;background:#e6e0d6"></div><div class="t pb" style="left:23px;top:51px">objectName</div><div class="t ot" style="left:154px;top:50px">login</div>
<div class="a" style="left:0;top:67px;width:400px;height:20px;background:#a0a0a0"></div><svg style="left:7px;top:73px" width="6" height="6" viewBox="0 0 6 6"><path d="M5.200 0.800V5.200H0.800Z" fill="#8c8c8c" stroke="#3c3c3c" stroke-width="0.800"/></svg><div class="t pb" style="left:23px;top:72px;color:#fff">QWidget</div>
<div class="a" style="left:0;top:87px;width:400px;height:22px;background:#ffffde"></div><div class="a" style="left:149px;top:87px;width:1px;height:22px;background:#e6e6d0"></div><div class="t pb" style="left:23px;top:93.500px">windowModality</div><div class="t ot" style="left:154px;top:92.500px">NonModal</div>
<div class="a" style="left:400px;top:0;width:17px;height:97px;background:#f0f0f0"></div><div class="a" style="left:401px;top:17px;width:15px;height:18px;background:#cdcdcd"></div><svg style="left:403px;top:5px" width="10" height="7" viewBox="0 0 10 7"><path d="M1 6L5 1.500L9 6" fill="none" stroke="#5a5a5a" stroke-width="2"/></svg><svg style="left:403px;top:85px" width="10" height="7" viewBox="0 0 10 7"><path d="M1 1L5 5.500L9 1" fill="none" stroke="#5a5a5a" stroke-width="2"/></svg></div>

<div class="a" id="taskbar"></div>
<!-- taskbar -->
<div class="a" style="left:116px;top:729px;width:58px;height:39px;background:#808080;border:1px solid #999;border-bottom:none"></div>
<div class="a" style="left:240px;top:729px;width:58px;height:39px;background:#808080;border:1px solid #999;border-bottom:none"></div>
<div class="a" style="left:302px;top:729px;width:54px;height:39px;background:#808080;border:1px solid #999;border-bottom:none"></div>
<div class="a" style="left:355px;top:729px;width:5px;height:39px;background:#808080;border:1px solid #999;border-bottom:none"></div>
<div class="a" style="left:364px;top:729px;width:58px;height:39px;background:#808080;border:1px solid #999;border-bottom:none"></div>
<div class="a" style="left:426px;top:729px;width:58px;height:39px;background:#808080;border:1px solid #999;border-bottom:none"></div>
<div class="a" style="left:488px;top:729px;width:58px;height:39px;background:#808080;border:1px solid #999;border-bottom:none"></div>
<div class="a" style="left:550px;top:729px;width:58px;height:39px;background:linear-gradient(#a2a2a2,#8e8e8e);border:1px solid #ececec;border-bottom:none;box-shadow:inset 1px 1px 0 rgba(255,255,255,.45),inset -1px 0 0 rgba(255,255,255,.45)"></div>
<svg style="left:11px;top:734px" width="28" height="27" viewBox="0 0 28 27"><path d="M0 4L12 2.300V12.800H0ZM13.500 2.100L28 0V12.800H13.500ZM0 14.200H12V24.700L0 23ZM13.500 14.200H28V27L13.500 24.900Z" fill="#fff"/></svg>
<svg style="left:65px;top:733px" width="30" height="30" viewBox="0 0 30 30"><defs>
<radialGradient id="rgG" cx="0.350" cy="0.300" r="0.800"><stop offset="0" stop-color="#d7ee10"/><stop offset="1" stop-color="#3f9a0a"/></radialGradient>
<radialGradient id="rgB" cx="0.400" cy="0.300" r="0.800"><stop offset="0" stop-color="#5db4ff"/><stop offset="1" stop-color="#1a62c8"/></radialGradient>
<radialGradient id="rgY" cx="0.400" cy="0.400" r="0.800"><stop offset="0" stop-color="#ffd83a"/><stop offset="1" stop-color="#d98a08"/></radialGradient>
<radialGradient id="rgR" cx="0.500" cy="0.400" r="0.800"><stop offset="0" stop-color="#f58a7a"/><stop offset="1" stop-color="#c8281c"/></radialGradient>
<clipPath id="cpY"><rect x="0" y="15" width="13" height="15"/></clipPath></defs>
<g stroke="#646464" stroke-width="1.300"><circle cx="9" cy="22" r="8" fill="url(#rgY)"/><circle cx="22" cy="22" r="8" fill="url(#rgR)"/><circle cx="21.500" cy="9" r="8" fill="url(#rgB)"/><circle cx="9" cy="9.500" r="8" fill="url(#rgG)"/><circle cx="9" cy="22" r="8" fill="url(#rgY)" clip-path="url(#cpY)"/></g><circle cx="15.300" cy="15.500" r="2.200" fill="#646464"/></svg>
<svg style="left:129px;top:734px" width="32" height="31" viewBox="0 0 32 31"><defs><linearGradient id="gFo" x1="0" y1="0" x2="0" y2="1"><stop offset="0" stop-color="#fbe9a6"/><stop offset="1" stop-color="#f1d06d"/></linearGradient><linearGradient id="gSt" x1="0" y1="0" x2="0" y2="1"><stop offset="0" stop-color="#bfe6fb"/><stop offset="1" stop-color="#3ea0dc"/></linearGradient></defs>
<path d="M1 4.500Q1 2 3.500 2H14.500L16 5H29Q31 5 31 7V25H1Z" fill="url(#gFo)" stroke="#d9b45a" stroke-width="0.800"/><rect x="8" y="3.500" width="9" height="3" fill="#fff"/><rect x="15" y="5.500" width="9" height="3" fill="#fff"/><rect x="22" y="7.500" width="8" height="3" fill="#fff"/>
<rect x="4" y="2.500" width="3" height="2" fill="#1bb31b"/><rect x="12" y="4.500" width="3" height="2" fill="#d62222"/><rect x="20" y="6.500" width="3" height="2" fill="#1e8ae6"/>
<path d="M1 9H31V25H1Z" fill="url(#gFo)" stroke="#e2bf63" stroke-width="0.600"/>
<path d="M4 17Q4 15 6 15H25Q27 15 27 17V29.500H21V22H10V29.500H4Z" fill="url(#gSt)" stroke="#2e8ccc" stroke-width="0.800"/><path d="M6 16.500H25" stroke="#e9f7ff" stroke-width="1.500"/><path d="M8 12l1 4 4 1-4 1-1 4-1-4-4-1 4-1z" fill="#fff" opacity="0.900"/></svg>
<svg style="left:192px;top:733px" width="30" height="30" viewBox="0 0 30 30"><circle cx="15" cy="15" r="15" fill="#dd4b3e"/><path d="M15 15L2.010 7.500A15 15 0 0 0 15 30Z" fill="#1b9a57"/><path d="M15 15L15 30A15 15 0 0 0 27.990 7.500H15Z" fill="#fdd23d"/><path d="M15 15L2.010 7.500A15 15 0 0 1 27.990 7.500L15 8.200Z" fill="#dd4b3e"/><path d="M15 15L8.900 18.500L2.010 7.500Z" fill="#1b9a57"/><path d="M15 30L21.100 18.500L15 15Z" fill="#fdd23d"/><circle cx="15" cy="15" r="7" fill="#f1f1f1"/><circle cx="15" cy="15" r="5.600" fill="#4a8af4"/></svg>
<svg style="left:254px;top:733px" width="30" height="30" viewBox="0 0 30 30"><defs><radialGradient id="rgGl" cx="0.500" cy="0.300" r="0.800"><stop offset="0" stop-color="#7fc0ff"/><stop offset="1" stop-color="#1f6fd6"/></radialGradient></defs><circle cx="15" cy="15" r="14.200" fill="url(#rgGl)" stroke="#fff" stroke-width="1.400"/><circle cx="15" cy="15" r="12.200" fill="none" stroke="#2a78dc" stroke-width="0.800"/><path d="M6 9c2-3 6-5 9-4 1 1-1 2 0 3s3-2 5-1c1 1-1 3-2 4s1 3-1 4-3-1-4 1-2 1-3-1-1-3-3-3-2-2-1-3z" fill="#f4f9ff"/><path d="M17 20c1-1 4-2 5-1s0 4-2 4-4-2-3-3z" fill="#f4f9ff"/><path d="M14 16.500l2 1-1 1.500z" fill="#f4f9ff"/></svg>
<svg style="left:313px;top:732px" width="31" height="32" viewBox="0 0 31 32"><rect x="16" y="4.500" width="14" height="23" fill="#fff" stroke="#2b579a" stroke-width="1"/><path d="M19 8.500h9M19 11.500h9M19 14.500h9M19 17.500h9M19 20.500h9M19 23.500h9" stroke="#2b579a" stroke-width="1.300"/><path d="M0 3.500L18.500 0V32L0 28.500Z" fill="#2b579a"/><text x="9.300" y="21.500" text-anchor="middle" font-family="Liberation Sans,sans-serif" font-weight="bold" font-size="14" fill="#fff">W</text></svg>
<svg style="left:378px;top:732.500px" width="31" height="33" viewBox="0 0 31 33"><circle cx="15.500" cy="16.500" r="15.500" fill="#f8cf1d"/><ellipse cx="14.900" cy="23.600" rx="6.900" ry="5.500" fill="#31c27c" transform="rotate(-15 14.900 23.600)"/><path d="M8.800 6.500L12.500 5L22.300 21.500L18.800 23.500Z" fill="#31c27c"/><path d="M9 7Q10 1.500 21 -0.300Q20.500 7.500 12.500 8.500Z" fill="#31c27c"/></svg>
<svg style="left:439px;top:731px" width="32" height="34" viewBox="0 0 32 34"><path d="M23 1.500L31 5V29L23 32.500L10.500 20.500L4.500 27.500L1 25.500V8.500L4.500 6.500L10.500 13.500Z" fill="#68217a" stroke="#fff" stroke-width="1.600" stroke-linejoin="round"/><path d="M23 10.500V23.500L15 17Z" fill="#fff"/><path d="M4.500 12.500V21.500L9 17Z" fill="#fff"/></svg>
<svg style="left:501px;top:732px" width="32" height="32" viewBox="0 0 32 32"><defs><clipPath id="cpAv"><circle cx="16" cy="16" r="16"/></clipPath><radialGradient id="rgAv" cx="0.450" cy="0.350" r="0.750"><stop offset="0" stop-color="#cfe6ea"/><stop offset="0.450" stop-color="#7fb3c6"/><stop offset="1" stop-color="#2f6f90"/></radialGradient></defs><g clip-path="url(#cpAv)"><rect width="32" height="32" fill="url(#rgAv)"/><path d="M0 14Q5 10 9 15T2 24Z" fill="#bfe4ee" opacity="0.800"/><path d="M22 12h10v4H23zM24 18h8v3h-7z" fill="#d9788a" opacity="0.750"/><path d="M21 20h11v8H20z" fill="#a55a48" opacity="0.700"/><path d="M7 32Q8 20 14 18.500L20 18Q25 22 25 32Z" fill="#cfc684"/><path d="M10 32Q12 25 15 24T19 32Z" fill="#a9b86a"/><path d="M9 29h14v3H9z" fill="#b8482a" opacity="0.800"/><path d="M10 12Q10 3 17 3T24 11Q24 17 21 20L19 15L15 20Q10 18 10 12Z" fill="#f3f6f7"/><ellipse cx="17.500" cy="14.500" rx="2.300" ry="3.300" fill="#f1d9c8"/><path d="M3 8Q8 3 12 5M24 5Q29 8 30 13" stroke="#e8f6fa" stroke-width="1.200" fill="none" opacity="0.700"/></g></svg>
<svg style="left:566.500px;top:739px" width="30" height="27" viewBox="0 0 30 27"><path d="M3 0H24.500V14.500L21.500 18H0V3Z" fill="#41cd52"/><text x="11.500" y="14.500" text-anchor="middle" font-family="Liberation Sans,sans-serif" font-weight="bold" font-size="14" fill="#fff" letter-spacing="-0.600">Qt</text><path d="M8.300 22.300L9.800 17.200L22.600 5.700L25.700 8.900L13 20.600Z" fill="#fff" opacity="0.550"/><path d="M10.230 17.470L22.800 6L25.200 8.600L12.670 20.130Z" fill="#f7c51e"/><path d="M11 18.300L23.600 6.900" stroke="#fbe37a" stroke-width="0.900"/><path d="M22.800 6L25.300 3.700L27.700 6.300L25.200 8.600Z" fill="#e88c8c"/><path d="M8.500 21.500L10.230 17.470L12.670 20.130Z" fill="#f3dcb0"/><path d="M8.500 21.500L9.200 19.900L10.200 21Z" fill="#333"/></svg>
<svg style="left:1036.500px;top:746.500px" width="8" height="5.300" viewBox="0 0 9 6"><path d="M0 5.500L4.500 0L9 5.500Z" fill="#fff"/></svg>
<svg style="left:1057px;top:741px" width="17" height="17" viewBox="0 0 17 17"><circle cx="8.500" cy="8.500" r="8" fill="#f8cf1d"/><path d="M7 3.500l5.500-3 0.500 3-4 2 1.700 5.500a3 3 0 1 1-2.200-1.600z" fill="#31c27c"/></svg>
<svg style="left:1082px;top:741px" width="15" height="17" viewBox="0 0 15 17"><path d="M2 0H13Q15 0 15 2V11Q15 13 13 13H12L10.500 16.500L8 13H2Q0 13 0 11V2Q0 0 2 0Z" fill="#1e9af0"/><path d="M7.500 2v9M3.600 4.200l7.800 4.600M11.400 4.200L3.600 8.800" stroke="#fff" stroke-width="1.900"/></svg>
<svg style="left:1105px;top:741px" width="17" height="17" viewBox="0 0 17 17"><circle cx="8.500" cy="8.500" r="8" fill="#f6e20a"/><path d="M2 13a8 8 0 0 0 13 0M4 2.500a8 8 0 0 1 11 3" stroke="#3c9a10" stroke-width="2" fill="none"/><path d="M8.500 4.500v8M4.500 8.500h8" stroke="#0c5c0c" stroke-width="2.200"/></svg>
<svg style="left:1129px;top:741px" width="17" height="17" viewBox="0 0 17 17"><rect width="17" height="17" rx="1.500" fill="#2a5fb4"/><path d="M1.500 10.500c2-4 7-6.500 10-5.500s4 4 4 5.500c-4 1.500-10 1.500-14 0z" fill="#fff"/><path d="M5 8c2-1 5-1 7 0.500" stroke="#2a5fb4" stroke-width="0.900" fill="none"/><path d="M2 12.500h13" stroke="#fff" stroke-width="1"/></svg>
<svg style="left:1153px;top:741px" width="17" height="17" viewBox="0 0 17 17"><rect x="8.500" y="2" width="7.500" height="13.500" rx="1" fill="none" stroke="#fff" stroke-width="1.500"/><rect x="10.500" y="0.500" width="3.500" height="1.500" fill="#fff"/><rect x="10.200" y="4" width="4" height="10" fill="#fff"/><path d="M2 1v4M6 1v4" stroke="#fff" stroke-width="1.400"/><path d="M0.800 5h6.400v3l-2 2v6h-2.400v-6l-2-2z" fill="#fff"/></svg>
<svg style="left:1177px;top:741px" width="17" height="17" viewBox="0 0 17 17"><rect x="5.500" y="2" width="10.500" height="8.500" fill="none" stroke="#fff" stroke-width="1.500"/><path d="M10.500 10.500v3M7 14.500h8" stroke="#fff" stroke-width="1.500"/><rect x="1" y="1" width="4" height="6" rx="1.300" fill="#646464" stroke="#fff" stroke-width="1.300"/><path d="M3 7v6.500h4" stroke="#fff" stroke-width="1.300" fill="none"/></svg>
<svg style="left:1202px;top:741px" width="16" height="16" viewBox="0 0 16 16"><path d="M1.500 5.500H4L8 1.500V14.500L4 10.500H1.500Z" fill="#fff" stroke="#e8e8e8" stroke-width="0.800"/><path d="M5 3v10" stroke="#999" stroke-width="0.700"/><path d="M11 5q2 3 0 6" stroke="#d0d0d0" stroke-width="1.200" fill="none"/></svg>
<div class="t" style="left:1229.500px;top:741.500px;font-size:14px;font-weight:bold;color:#fff">中</div>
<svg style="left:1256px;top:740px" width="18" height="18" viewBox="0 0 18 18"><rect x="2.500" y="2.500" width="13" height="13" rx="1" fill="#f0440e" transform="rotate(-12 9 9)"/><text x="9" y="13.500" text-anchor="middle" font-family="Liberation Sans,sans-serif" font-weight="bold" font-style="italic" font-size="13" fill="#fff">S</text></svg>
<div class="t" id="clk" style="left:1290.500px;top:734px;width:60px;text-align:center;font-size:12px;color:#fff">15:55</div>
<div class="t" id="dat" style="left:1285.500px;top:752px;width:70px;text-align:center;font-size:12px;letter-spacing:0.550px;color:#fff">2018/4/29</div>

</body>
</html>
